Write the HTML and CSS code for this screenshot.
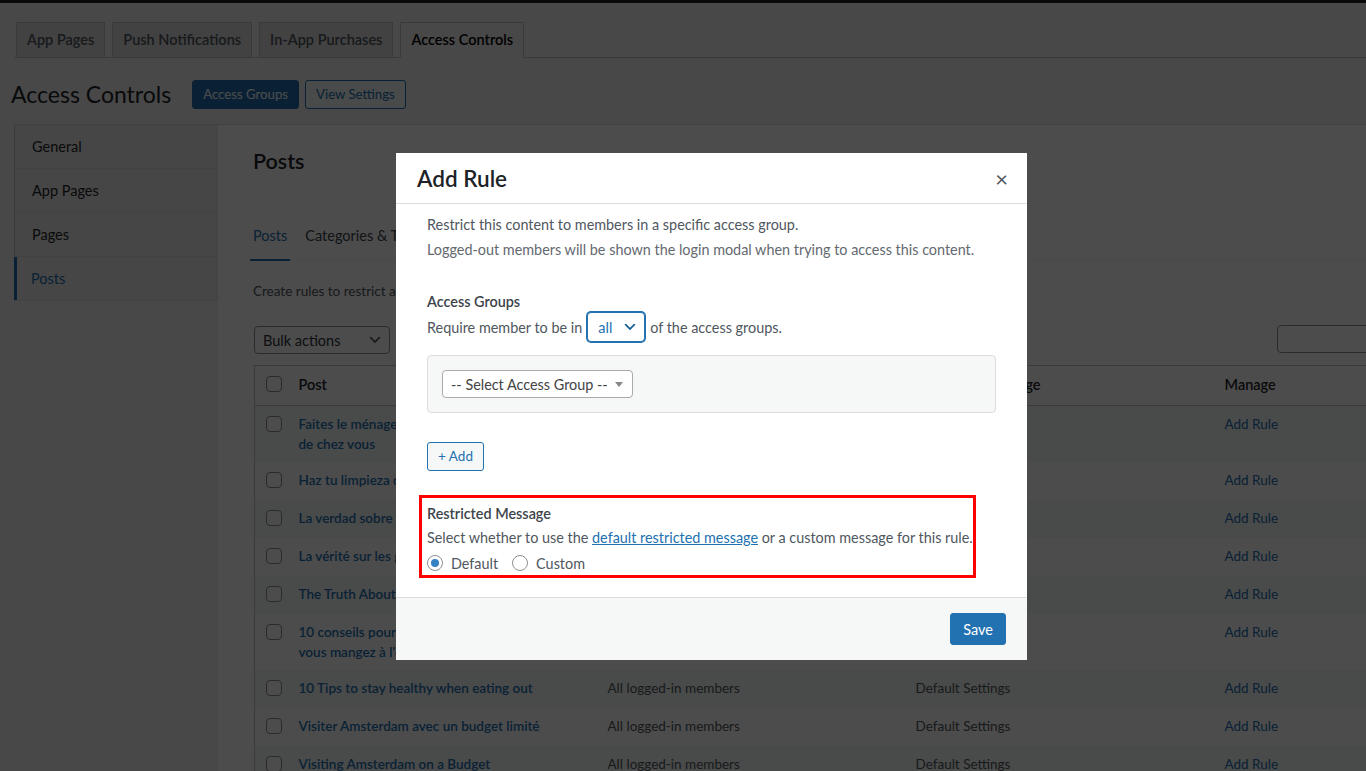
FILE: index.html
```html
<!DOCTYPE html>
<html lang="en">
<head>
  <meta charset="UTF-8">
  <title>Access Controls</title>
  <link rel="stylesheet" href="styles.css">
</head>
<body>

  <div class="adminbar"></div>

  <div class="wrap">
    <nav class="nav-tabs">
      <a href="#">App Pages</a>
      <a href="#">Push Notifications</a>
      <a href="#">In-App Purchases</a>
      <a href="#" class="active">Access Controls</a>
    </nav>

    <div class="page-head">
      <h1>Access Controls</h1>
      <a href="#" class="button button-primary">Access Groups</a>
      <a href="#" class="button">View Settings</a>
    </div>

    <div class="layout">
      <ul class="side-menu">
        <li><a href="#">General</a></li>
        <li><a href="#">App Pages</a></li>
        <li><a href="#">Pages</a></li>
        <li class="current"><a href="#">Posts</a></li>
      </ul>

      <div class="panel">
        <h2>Posts</h2>

        <div class="sub-tabs">
          <a href="#" class="current">Posts</a>
          <a href="#">Categories &amp; Tags</a>
        </div>

        <p class="desc">Create rules to restrict access to posts for members of specific access groups.</p>

        <div class="tablenav">
          <div class="select-box bulk">
            <span>Bulk actions</span>
            <svg viewBox="0 0 20 20" width="16" height="16"><path d="M5 6l5 5 5-5 2 1-7 7-7-7z" fill="#50575e"/></svg>
          </div>
          <input type="search" class="search">
        </div>

        <table class="rules">
          <colgroup>
            <col style="width: 36px;">
            <col style="width: 309px;">
            <col style="width: 308px;">
            <col style="width: 309px;">
            <col style="width: 200px;">
          </colgroup>
          <thead>
            <tr><th class="cb"><input type="checkbox"></th><th>Post</th><th>Access Groups</th><th>Restricted Message</th><th>Manage</th></tr>
          </thead>
          <tbody>
            <tr><td class="cb"><input type="checkbox"></td><td class="title"><a href="#">Faites le ménage de printemps depuis le confort de chez vous</a></td><td>All logged-in members</td><td>Default Settings</td><td><a href="#">Add Rule</a></td></tr>
            <tr><td class="cb"><input type="checkbox"></td><td class="title"><a href="#">Haz tu limpieza de primavera en casa</a></td><td>All logged-in members</td><td>Default Settings</td><td><a href="#">Add Rule</a></td></tr>
            <tr><td class="cb"><input type="checkbox"></td><td class="title"><a href="#">La verdad sobre los carbohidratos</a></td><td>All logged-in members</td><td>Default Settings</td><td><a href="#">Add Rule</a></td></tr>
            <tr><td class="cb"><input type="checkbox"></td><td class="title"><a href="#">La vérité sur les glucides</a></td><td>All logged-in members</td><td>Default Settings</td><td><a href="#">Add Rule</a></td></tr>
            <tr><td class="cb"><input type="checkbox"></td><td class="title"><a href="#">The Truth About Carbs</a></td><td>All logged-in members</td><td>Default Settings</td><td><a href="#">Add Rule</a></td></tr>
            <tr><td class="cb"><input type="checkbox"></td><td class="title"><a href="#">10 conseils pour rester en bonne santé lorsque vous mangez à l'extérieur</a></td><td>All logged-in members</td><td>Default Settings</td><td><a href="#">Add Rule</a></td></tr>
            <tr><td class="cb"><input type="checkbox"></td><td class="title"><a href="#">10 Tips to stay healthy when eating out</a></td><td>All logged-in members</td><td>Default Settings</td><td><a href="#">Add Rule</a></td></tr>
            <tr><td class="cb"><input type="checkbox"></td><td class="title"><a href="#">Visiter Amsterdam avec un budget limité</a></td><td>All logged-in members</td><td>Default Settings</td><td><a href="#">Add Rule</a></td></tr>
            <tr><td class="cb"><input type="checkbox"></td><td class="title"><a href="#">Visiting Amsterdam on a Budget</a></td><td>All logged-in members</td><td>Default Settings</td><td><a href="#">Add Rule</a></td></tr>
          </tbody>
        </table>
      </div>
    </div>
  </div>

  <div class="backdrop"></div>

  <div class="modal">
    <div class="modal-header">
      <h2>Add Rule</h2>
      <span class="close">&times;</span>
    </div>

    <div class="modal-body">
      <p class="lead">Restrict this content to members in a specific access group.</p>
      <p class="note">Logged-out members will be shown the login modal when trying to access this content.</p>

      <div class="field-label">Access Groups</div>
      <div class="require-row">
        <span>Require member to be in</span>
        <div class="select-box match">
          <span>all</span>
          <svg viewBox="0 0 20 20" width="16" height="16"><path d="M5 6l5 5 5-5 2 1-7 7-7-7z" fill="#135e96"/></svg>
        </div>
        <span>of the access groups.</span>
      </div>

      <div class="group-box">
        <div class="select2">
          <span>-- Select Access Group --</span>
          <b class="arrow"></b>
        </div>
      </div>

      <a href="#" class="add-btn">+ Add</a>

      <div class="restricted">
        <div class="field-label">Restricted Message</div>
        <div class="msg-line">Select whether to use the <a href="#">default restricted message</a> or a custom message for this rule.</div>
        <div class="radios">
          <label><input type="radio" name="msg" checked> Default</label>
          <label><input type="radio" name="msg"> Custom</label>
        </div>
      </div>
    </div>

    <div class="modal-footer">
      <button class="save">Save</button>
    </div>
  </div>

</body>
</html>
```

FILE: styles.css
```css
    * {
      box-sizing: border-box;
    }

    html, body {
      height: 100%;
      overflow: hidden;
    }

    body {
      position: relative;
      margin: 0;
      font-family: Lato, "Noto Sans", sans-serif;
      font-size: 13.5px;
      color: #3c434a;
      background-color: #f0f0f1;
    }

    a {
      color: #2271b1;
      text-decoration: none;
    }

    .adminbar {
      height: 3px;
      background-color: #1d2327;
    }

    .wrap {
      padding: 19px 0 0 14px;
    }

    /* top tabs */
    .nav-tabs {
      display: flex;
      gap: 7px;
      padding-left: 2px;
      border-bottom: 1px solid #c3c4c7;
    }

    .nav-tabs a {
      padding: 5px 10px;
      line-height: 24px;
      font-size: 14.5px;
      font-weight: 600;
      color: #50575e;
      background-color: #dcdcde;
      border: 1px solid #c3c4c7;
      margin-bottom: -1px;
    }

    .nav-tabs a.active {
      background-color: #f0f0f1;
      color: #000;
      border-bottom-color: #f0f0f1;
    }

    .page-head {
      display: flex;
      align-items: center;
      margin-top: 21px;
      margin-left: -3px;
    }

    .page-head h1 {
      margin: 0 21px 0 0;
      font-size: 23px;
      font-weight: 400;
      line-height: 30px;
      color: #1d2327;
    }

    .button {
      display: inline-block;
      height: 29px;
      padding: 0 10px;
      line-height: 27px;
      font-size: 13.2px;
      color: #2271b1;
      background-color: #f6f7f7;
      border: 1px solid #2271b1;
      border-radius: 3px;
      margin-right: 6px;
    }

    .button-primary {
      background-color: #2271b1;
      color: #fff;
    }

    /* settings layout */
    .layout {
      display: flex;
      margin-top: 15px;
    }

    .side-menu {
      list-style: none;
      margin: 0;
      padding: 0;
      width: 204px;
      flex-shrink: 0;
      background-color: #ebebec;
      border-left: 1px solid #c3c4c7;
      border-top: 1px solid #dcdcde;
      border-right: 1px solid #dcdcde;
      align-self: flex-start;
    }

    .side-menu li {
      border-bottom: 1px solid #dcdcde;
    }

    .side-menu a {
      display: block;
      padding: 11px 17px 10px;
      line-height: 22px;
      font-size: 14.5px;
      color: #1d2327;
    }

    .side-menu li.current a {
      border-left: 3px solid #2271b1;
      padding-left: 14px;
      margin-left: -1px;
      color: #2271b1;
    }

    .panel {
      flex-shrink: 0;
      width: 1240px;
      min-height: 700px;
      background-color: #fff;
      border-top: 1px solid #dcdcde;
      padding: 23px 35px;
    }

    .panel h2 {
      margin: 0;
      font-size: 21.5px;
      line-height: 26px;
      font-weight: 600;
      color: #1d2327;
    }

    .sub-tabs {
      display: flex;
      gap: 12px;
      margin-top: 52px;
      border-bottom: 1px solid #f0f0f1;
    }

    .sub-tabs a {
      font-size: 14.5px;
      line-height: 20px;
      padding: 0 3px 13px;
      color: #3c434a;
      border-bottom: 2px solid transparent;
      margin-bottom: -1px;
    }

    .sub-tabs a:first-child {
      margin-left: -3px;
    }

    .sub-tabs a.current {
      color: #2271b1;
      border-bottom-color: #2271b1;
    }

    .desc {
      margin: 20px 0 0;
      line-height: 20px;
      color: #50575e;
    }

    .tablenav {
      display: flex;
      justify-content: space-between;
      align-items: center;
      width: 1162px;
      margin-top: 25px;
      margin-left: 1px;
    }

    .select-box {
      display: flex;
      align-items: center;
      justify-content: space-between;
      border: 1px solid #8c8f94;
      border-radius: 4px;
      background-color: #fff;
      font-size: 14.5px;
    }

    .bulk {
      width: 136px;
      height: 28px;
      padding: 0 6px 0 8px;
      color: #2c3338;
    }

    .search {
      width: 139px;
      height: 28px;
      border: 1px solid #8c8f94;
      border-radius: 4px;
      margin-top: -3px;
    }

    table.rules {
      table-layout: fixed;
      width: 1162px;
      border-collapse: collapse;
      border: 1px solid #c3c4c7;
      margin-top: 11px;
      margin-left: 1px;
      background-color: #fff;
    }

    .rules th {
      text-align: left;
      font-weight: 600;
      font-size: 14.5px;
      line-height: 22px;
      padding: 8px 8px 9px;
      color: #1d2327;
      border-bottom: 1px solid #c3c4c7;
    }

    .rules td {
      vertical-align: top;
      padding: 8px;
      height: 38px;
      line-height: 20px;
      color: #50575e;
    }

    .rules tbody tr:nth-child(odd) {
      background-color: #f6f7f7;
    }

    .rules .title a {
      font-weight: 600;
    }

    .rules .cb {
      padding: 10px 0 0 11px;
    }

    .rules th.cb {
      padding-top: 10px;
      vertical-align: top;
    }

    .rules input[type="checkbox"] {
      appearance: none;
      margin: 0;
      display: block;
      width: 16px;
      height: 16px;
      border: 1px solid #8c8f94;
      border-radius: 4px;
      background-color: #fff;
    }

    /* modal and its backdrop */
    .backdrop {
      position: absolute;
      top: 0;
      left: 0;
      width: 1366px;
      height: 771px;
      z-index: 10;
      background-color: #000;
      opacity: 0.7;
    }

    .modal {
      position: absolute;
      left: 396px;
      top: 153px;
      z-index: 20;
      width: 631px;
      background-color: #fff;
      color: #50575e;
    }

    .modal-header {
      height: 51px;
      display: flex;
      justify-content: space-between;
      align-items: center;
      padding: 0 19px 0 21px;
      border-bottom: 1px solid #dcdcde;
    }

    .modal-header h2 {
      margin: 0;
      font-size: 22.5px;
      font-weight: 600;
      color: #1d2327;
    }

    .close {
      font-size: 22px;
      color: #50575e;
    }

    .modal-body {
      height: 393px;
      padding: 8px 31px 0;
      font-size: 14.4px;
    }

    .modal-body p {
      margin: 0;
      line-height: 25px;
    }

    .modal-body .note {
      color: #646970;
    }

    .field-label {
      margin-top: 30px;
      line-height: 20px;
      font-weight: 600;
      color: #3c434a;
    }

    .require-row {
      display: flex;
      align-items: center;
      gap: 5px;
      height: 30px;
    }

    .match {
      width: 58px;
      height: 30px;
      padding: 0 6px 0 10px;
      color: #2271b1;
      border-color: #2271b1;
      box-shadow: 0 0 0 1px #2271b1;
    }

    .group-box {
      margin-top: 13px;
      padding: 14px;
      background-color: #f6f7f7;
      border: 1px solid #dcdcde;
      border-radius: 4px;
    }

    .select2 {
      display: flex;
      align-items: center;
      justify-content: space-between;
      width: 191px;
      height: 28px;
      padding: 0 9px 0 8px;
      border: 1px solid #aaa;
      border-radius: 4px;
      background-color: #fff;
      color: #444;
    }

    .select2 .arrow {
      border-style: solid;
      border-width: 5px 4px 0;
      border-color: #888 transparent transparent;
    }

    .add-btn {
      display: inline-block;
      margin-top: 29px;
      height: 29px;
      line-height: 27px;
      padding: 0 10px;
      font-size: 13.5px;
      border: 1px solid #2271b1;
      border-radius: 3px;
      background-color: #f6f7f7;
    }

    .restricted {
      margin: 24px 0 0 -8px;
      width: 557px;
      height: 83px;
      border: 3px solid #f00;
      padding: 5px 0 0 5px;
      white-space: nowrap;
    }

    .restricted .field-label {
      margin-top: 0;
      line-height: 22px;
    }

    .msg-line {
      line-height: 26px;
    }

    .msg-line a {
      text-decoration: underline;
    }

    .radios {
      display: flex;
      align-items: center;
      gap: 14px;
      height: 24px;
    }

    .radios label {
      display: flex;
      align-items: center;
      gap: 8px;
    }

    input[type="radio"] {
      appearance: none;
      margin: 0;
      width: 16px;
      height: 16px;
      border: 1px solid #8c8f94;
      border-radius: 50%;
      background-color: #fff;
      display: flex;
      align-items: center;
      justify-content: center;
    }

    input[type="radio"]:checked::before {
      content: "";
      width: 8px;
      height: 8px;
      border-radius: 50%;
      background-color: #3582c4;
    }

    .modal-footer {
      height: 63px;
      border-top: 1px solid #dcdcde;
      background-color: #f6f7f7;
      display: flex;
      justify-content: flex-end;
      align-items: center;
      padding-right: 21px;
    }

    .save {
      height: 32px;
      padding: 0 12px;
      font-family: inherit;
      font-size: 14.5px;
      color: #fff;
      background-color: #2271b1;
      border: 1px solid #2271b1;
      border-radius: 3px;
    }
```
